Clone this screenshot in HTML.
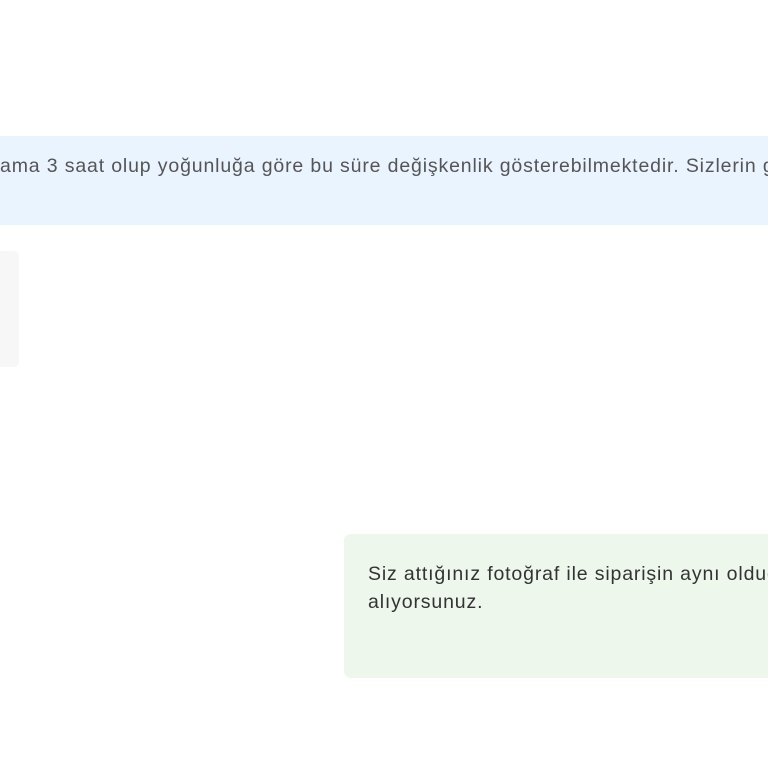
<!DOCTYPE html>
<html><head><meta charset="utf-8"><style>
html,body{margin:0;padding:0;width:768px;height:768px;overflow:hidden;background:#fff;font-family:"Liberation Sans","DejaVu Sans",sans-serif}
.b{position:absolute;left:0;top:136px;width:768px;height:89px;background:#eaf4fe}
.t1{position:absolute;left:0;top:155px;font-size:19.5px;color:#555;white-space:nowrap;letter-spacing:0.85px}
.g{position:absolute;left:-10px;top:251px;width:29px;height:116px;background:#f7f7f7;border-radius:5px}
.gr{position:absolute;left:344px;top:534px;width:440px;height:144px;background:#edf7ec;border-radius:7px}
.t2{position:absolute;left:368px;top:560px;font-size:19.5px;line-height:28px;color:#333;white-space:nowrap;letter-spacing:0.85px}
</style></head><body>
<div class="b"></div>
<div class="t1">ama 3 saat olup yoğunluğa göre bu süre değişkenlik gösterebilmektedir. Sizlerin g</div>
<div class="g"></div>
<div class="gr"></div>
<div class="t2">Siz attığınız fotoğraf ile siparişin aynı olduğ<br>alıyorsunuz.</div>
</body></html>
